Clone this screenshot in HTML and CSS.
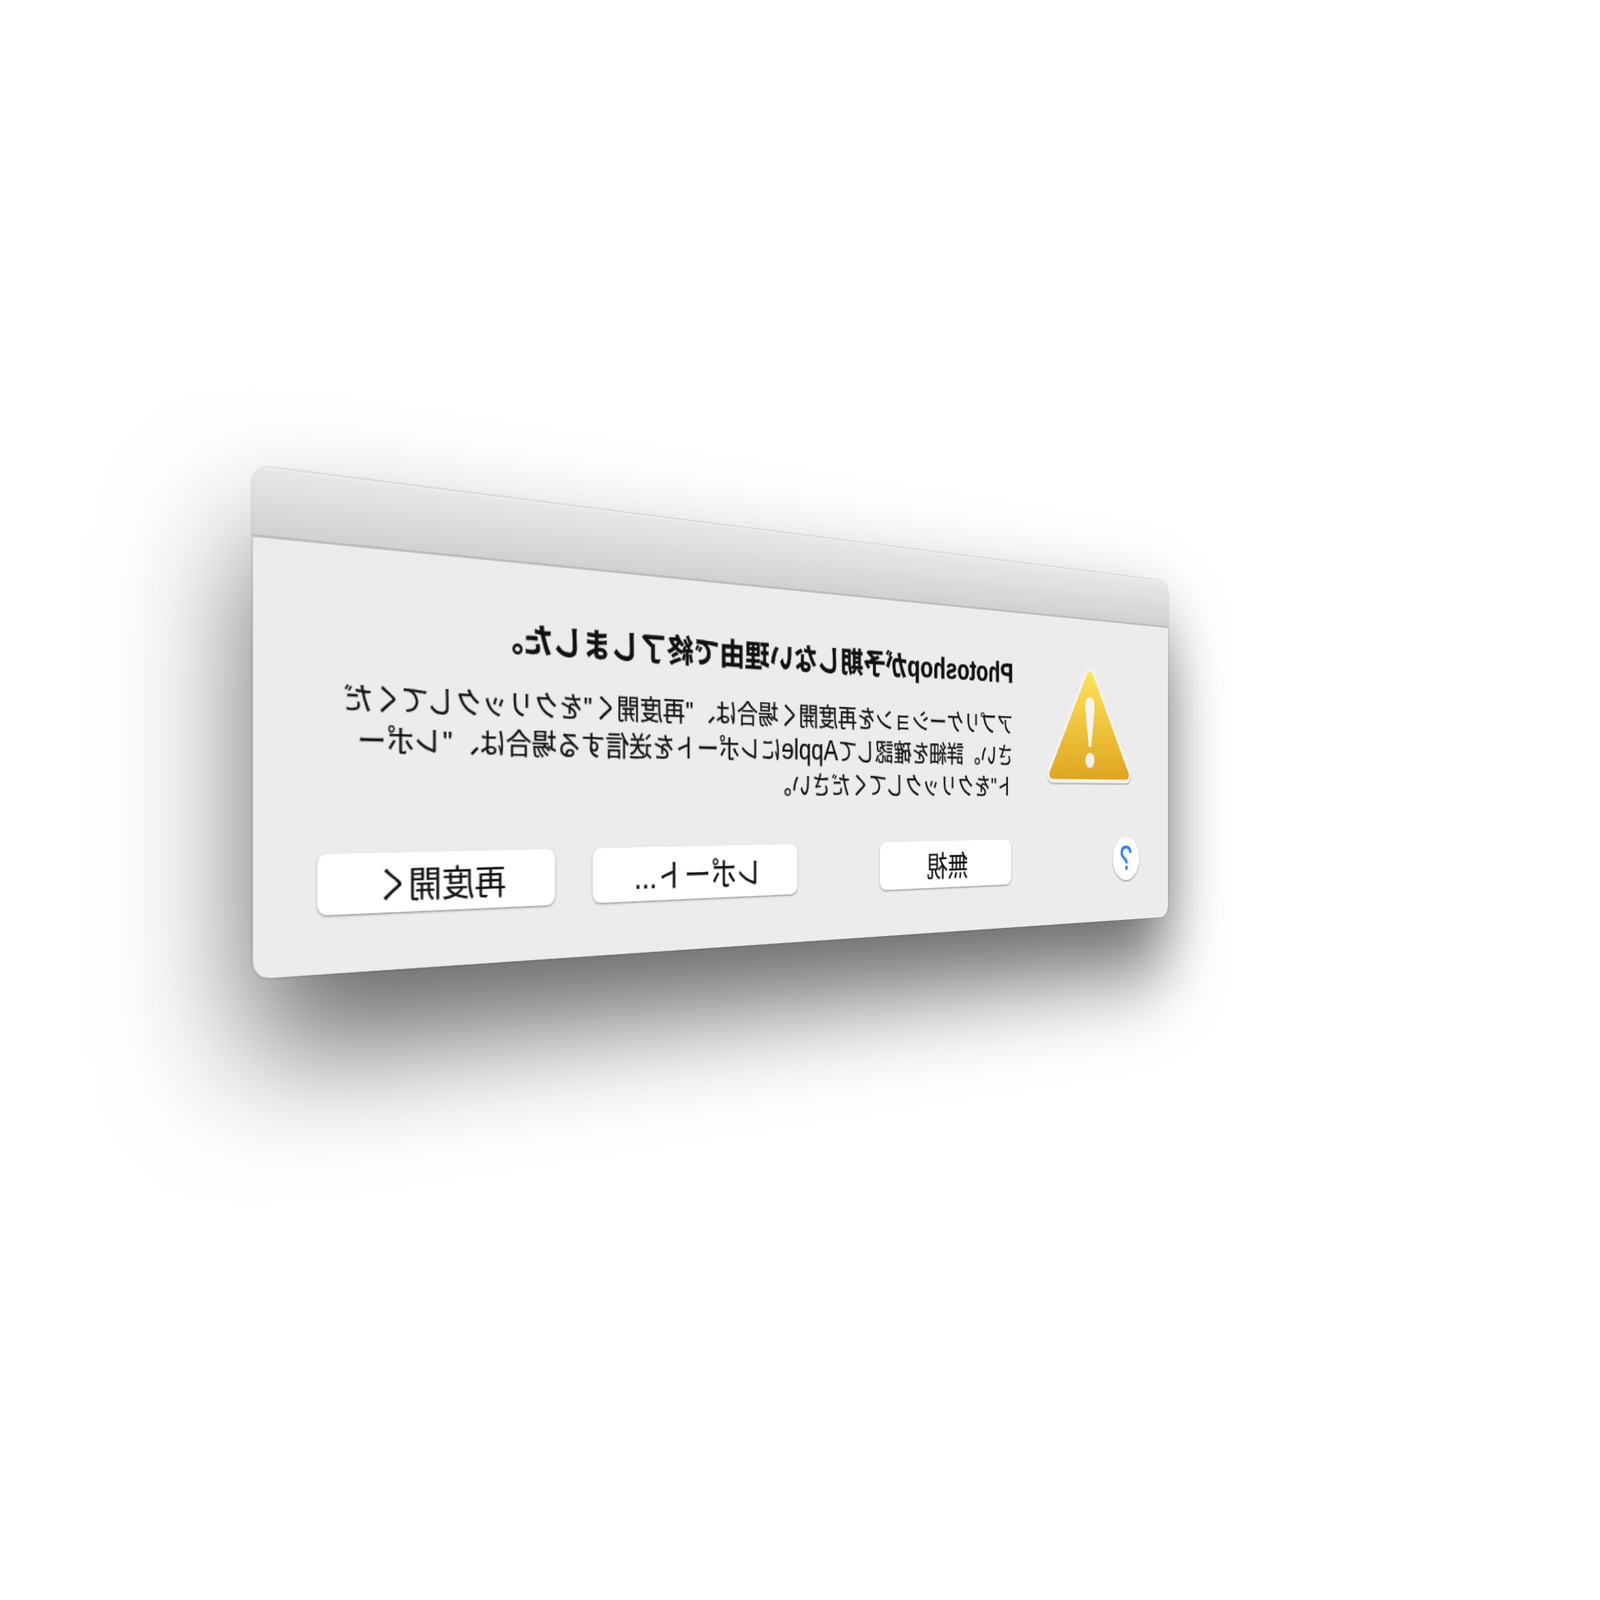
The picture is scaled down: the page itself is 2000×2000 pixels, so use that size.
FILE: index.html
```html
<!DOCTYPE html>
<html lang="ja">
<head>
<meta charset="utf-8">
<title>Photoshop</title>
<link rel="stylesheet" href="styles.css">
</head>
<body>
<div class="dialog">
  <div class="titlebar"></div>
  <div class="content">
    <div class="main">
      <svg class="warn" viewBox="0 0 133 127" width="133" height="127" aria-hidden="true">
        <defs>
          <linearGradient id="amber" gradientUnits="userSpaceOnUse" x1="0" y1="4" x2="0" y2="122">
            <stop offset="0" stop-color="#fee359"/>
            <stop offset="1" stop-color="#dfa520"/>
          </linearGradient>
        </defs>
        <polygon points="66.5,7 7,117 126,117" fill="#a9a9a9" stroke="#a9a9a9" stroke-width="18" stroke-linejoin="round" transform="translate(0 2)" opacity=".7"/>
        <polygon points="66.5,7 7,117 126,117" fill="#f3f3f3" stroke="#f3f3f3" stroke-width="18" stroke-linejoin="round"/>
        <polygon points="66.5,7 7,117 126,117" fill="url(#amber)" stroke="url(#amber)" stroke-width="10" stroke-linejoin="round"/>
        <path d="M66.5 31c4.400 0 7.500 3 7.500 8c0 9-4.500 37-5.500 47h-4c-1-10-5.500-38-5.500-47c0-5 3.100-8 7.500-8z" fill="#f4f4f4"/>
        <ellipse cx="66.500" cy="101" rx="7.500" ry="8.500" fill="#efefef"/>
      </svg>
      <div class="copy">
        <h1 class="heading">Photoshopが予期しない理由で終了しました。</h1>
        <p class="message">アプリケーションを再度開く場合は、<span class="quote">"</span>再度開く<span class="quote">"</span>をクリックしてくだ<br>さい。詳細を確認して<span class="latin">Apple</span>にレポートを送信する場合は、<span class="quote">"</span>レポー<br>ト<span class="quote">"</span>をクリックしてください。</p>
      </div>
    </div>
    <div class="footer">
      <button class="help">?</button>
      <button class="btn btn-ignore">無視</button>
      <button class="btn btn-report">レポート...</button>
      <button class="btn btn-reopen">再度開く</button>
    </div>
  </div>
</div>
</body>
</html>
```
FILE: styles.css
```css
html, body {
  margin: 0;
  padding: 0;
  width: 2000px;
  height: 2000px;
  background: #fff;
  overflow: hidden;
}

.dialog {
  position: absolute;
  left: 0;
  top: 0;
  width: 1060px;
  height: 390px;
  box-sizing: border-box;
  display: flex;
  flex-direction: column;
  background: #ececec;
  border-radius: 13px;
  font-family: "Liberation Sans", "Noto Sans CJK JP", sans-serif;
  color: #111;
  transform-origin: 0 0;
  transform: matrix3d(-1.18279, -0.32751, 0, -0.00032769, 0, 1.07436, 0, 0, 0, 0, 1, 0, 1460, 727, 0, 1);
  box-shadow: 0 56px 100px rgba(0, 0, 0, .6), 0 0 2px rgba(0, 0, 0, .4);
}

.titlebar {
  height: 54px;
  flex: none;
  box-sizing: border-box;
  border-radius: 13px 13px 0 0;
  background: linear-gradient(#e9e8e9, #d1d0d2);
  border-top: 1px solid #f2f2f2;
  border-bottom: 2px solid #bcbcbc;
}

.content {
  flex: 1;
  display: flex;
  flex-direction: column;
  filter: blur(.5px);
}

.main {
  display: flex;
  align-items: flex-start;
  padding: 54px 60px 0 66px;
  gap: 53px;
  height: 242px;
  box-sizing: border-box;
}

.warn {
  flex: none;
  margin-top: 1px;
  display: block;
  overflow: visible;
}

.copy {
  flex: 1;
  min-width: 0;
  margin-top: -8px;
}

.heading {
  margin: 0 0 19px;
  font-size: 28.7px;
  line-height: 38px;
  font-weight: 700;
  white-space: nowrap;
  -webkit-text-stroke: .3px #111;
}

.message {
  margin: 0;
  font-size: 24px;
  line-height: 33px;
  color: #111;
  white-space: nowrap;
  -webkit-text-stroke: .25px #111;
}

.quote {
  padding: 0 .5px;
}

.latin {
  font-size: 27px;
}

.footer {
  display: flex;
  align-items: center;
  padding-left: 50px;
  height: 48px;
}

.help {
  flex: none;
  width: 45px;
  height: 49px;
  padding: 0;
  border: 0;
  border-radius: 50%;
  background: #fff;
  color: #2a7ffb;
  font: 400 38px "Liberation Sans", sans-serif;
  -webkit-text-stroke: .6px #2a7ffb;
  box-shadow: 0 1px 2px rgba(0, 0, 0, .4);
  margin-right: 160px;
}

.btn {
  height: 48px;
  padding: 0;
  border: 0;
  border-radius: 8px;
  background: #fff;
  color: #111;
  font: 400 29px "Liberation Sans", "Noto Sans CJK JP", sans-serif;
  -webkit-text-stroke: .2px #111;
  box-shadow: 0 1px 2px rgba(0, 0, 0, .4);
}

.btn-ignore {
  width: 183px;
  margin-right: 103px;
}

.btn-report {
  width: 224px;
  margin-right: 37px;
}

.btn-reopen {
  width: 208px;
}
```
